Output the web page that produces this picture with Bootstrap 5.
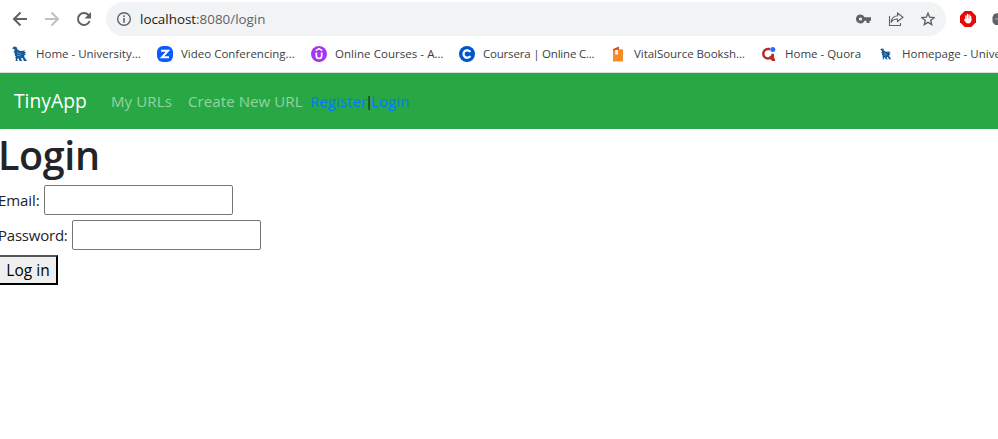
<!DOCTYPE html>
<html lang="en">
<head>
<meta charset="utf-8">
<title>TinyApp</title>
<link href="https://cdn.jsdelivr.net/npm/bootstrap@5.3.0/dist/css/bootstrap.min.css" rel="stylesheet">
<style>
body{font-family:"Segoe UI","Open Sans","Noto Sans",sans-serif;font-size:15px;line-height:24px;color:#212529;overflow:hidden;width:998px;height:439px}
svg{flex:none;display:block}
.toolbar{height:38px;padding-left:12px}
.forward,.reload{margin-left:16px}
.share{margin:0 17px}
.blocker{margin-left:14px}
.extension{margin-left:16px}
.omnibox{width:840px;height:34px;border-radius:17px;background:#f1f3f4;margin-left:14px;padding:0 11px 0 10px;font-size:13.4px;color:#5f6368}
.omnibox b{font-weight:400;color:#202124}
.bookmarks{height:35px;padding:0 0 3px 12px;border-bottom:1px solid #dadce0;font-size:11.5px;color:#3c4043}
.bookmark{flex:none;height:31px}
.bm-uni{width:145px}
.bm-zoom{width:154px}
.bm-udemy{width:148px;letter-spacing:.05px}
.bm-coursera{width:151px;letter-spacing:-.2px}
.bm-vital{width:151px;letter-spacing:-.05px}
.bm-quora{width:117px}
.bm-home svg{margin:0 10px 0 2px}
.site-nav{height:56px;background:#28a745;padding:0 0 0 14px}
.site-brand{width:97px;font-size:19.3px;color:#fff;text-decoration:none}
.site-link{color:rgba(255,255,255,.5);text-decoration:none}
.urls{width:77px;letter-spacing:.12px}.create{width:122px;letter-spacing:.1px}
.auth{letter-spacing:.08px}
.auth a{color:#007bff;text-decoration:none}
.auth span{font-family:"Liberation Sans",sans-serif;font-size:14px}
.page{margin-left:-2px}
.page h1{font-size:39.5px;font-weight:600;line-height:48px;margin:0;padding-top:2px;height:56px;letter-spacing:-.4px}
.form-line{height:30px;margin-bottom:5px}
.form-line input{width:189px;height:30px;border:1px solid #767676;border-radius:2px;background:#fff}
.email{width:46px;letter-spacing:-.1px}.password{width:74px;letter-spacing:-.22px}
.submit{width:60px;height:30px;border:2px outset #000;background:#efefef;color:#000;padding:0;line-height:26px;font-size:15.5px}
</style>
<script src="https://cdn.jsdelivr.net/npm/bootstrap@5.3.0/dist/js/bootstrap.bundle.min.js"></script>
</head>
<body class="bg-white">
<svg width="0" height="0" class="position-absolute"><defs>
<symbol id="bird" viewBox="0 0 16 16"><path fill="#155a96" d="M0 2.500 2 .5 4.500 1 5.500 3.500 8 5l5.500-.5L12 6l2.500.3-2 1.200L14 8.500l-1.700.7v1.800l2.700 4h-3l-1.500-3H9l.5 2 1 1H7.500L6.500 12l-1.500 1.500 1 1.500H3.500l.5-2.500-1-.5 1-1.500L2.500 9 3 7.500 1.500 6 2.700 5 2 3z"/><path stroke="#8fb3d1" stroke-width=".7" fill="none" d="m5 6.500 4.500 2M5 9l3.500 1"/></symbol>
</defs></svg>
<header>
<div class="toolbar d-flex align-items-center">
<svg width="16" height="16" viewBox="0 0 16 16" fill="none" stroke="#5f6368" stroke-width="2"><path d="M15 8H2M8.500 1.500 2 8l6.500 6.500"/></svg>
<svg class="forward" width="16" height="16" viewBox="0 0 16 16" fill="none" stroke="#bdc1c6" stroke-width="2"><path d="M1 8h13M7.500 1.500 14 8l-6.500 6.500"/></svg>
<svg class="reload" width="16" height="16" viewBox="0 0 16 16" fill="none" stroke="#5f6368" stroke-width="2"><path d="M13.600 10A6 6 0 1 1 12.300 3.800L14 5.500"/><path fill="#5f6368" stroke="none" d="M15 1v6.500H8.500z"/></svg>
<div class="omnibox d-flex align-items-center">
<svg width="16" height="16" viewBox="0 0 16 16"><circle cx="8" cy="8" r="6.300" fill="none" stroke="#5f6368" stroke-width="1.400"/><path fill="#5f6368" d="M7.200 4.300h1.600v1.600H7.200zM7.200 7h1.600v4.700H7.200z"/></svg>
<div class="ms-2 me-auto"><b>localhost</b>:8080/login</div>
<svg width="15" height="10" viewBox="0 0 15 10"><path fill="#5f6368" fill-rule="evenodd" d="M4.500.5A4.500 4.500 0 1 0 8.600 6.800H10.500V9h3V6.800H15V3.200H8.600A4.500 4.500 0 0 0 4.500.5zm0 2.900a1.600 1.600 0 1 1 0 3.200 1.600 1.600 0 0 1 0-3.200z"/></svg>
<svg class="share" width="16" height="16" viewBox="0 0 16 16" fill="none" stroke="#5f6368" stroke-width="1.100"><path d="M1.500 5v9.500h11v-2.500M9.500 2l5.500 4.200-5.500 4.300V8C6.500 8 4.500 9 3 11.500c.5-4 3-6.500 6.500-6.800z"/></svg>
<svg width="14" height="14" viewBox="0 0 14 14" fill="none" stroke="#5f6368" stroke-width="1.400"><path d="m7 1.200 1.700 4 4.300.4-3.300 2.800 1 4.200L7 10.400l-3.700 2.200 1-4.200L1 5.600l4.300-.4z"/></svg>
</div>
<svg class="blocker" width="16" height="16" viewBox="0 0 16 16"><path fill="#e50909" d="M4.700 0h6.600L16 4.700v6.600L11.300 16H4.700L0 11.300V4.700z"/><path stroke="#fff" stroke-width="1.300" stroke-linecap="round" fill="none" d="M5.900 9V4.800M7.500 8V3.500M9.100 8V3.800M10.700 9V5.200"/><path fill="#fff" d="M5.300 7.500h6.100c.3 3.300-.8 5-3.200 5-1.900 0-3.300-1.800-4.300-4l1-.4z"/></svg>
<svg class="extension" width="6" height="12" viewBox="0 0 6 12"><path fill="#5f6368" d="M6 0 2 1 .5 4v5L3 12h3z"/><path stroke="#aaa" d="M3 6h3"/></svg>
</div>
<div class="bookmarks d-flex align-items-center text-nowrap">
<div class="bookmark bm-uni d-flex align-items-center gap-2"><svg width="16" height="16"><use href="#bird"/></svg>Home - University...</div>
<div class="bookmark bm-zoom d-flex align-items-center gap-2"><svg width="16" height="16" viewBox="0 0 16 16"><rect width="16" height="16" rx="6" fill="#0b5cff"/><path fill="none" stroke="#fff" stroke-width="2" d="M4 4.700h7L5 11.300h7"/></svg>Video Conferencing...</div>
<div class="bookmark bm-udemy d-flex align-items-center gap-2"><svg width="16" height="16" viewBox="0 0 16 16"><circle cx="8" cy="8" r="8" fill="#a435f0"/><path fill="none" stroke="#fff" stroke-width="1.700" d="M5.300 6.500v3.200a2.700 2.700 0 0 0 5.400 0V6.500"/><path fill="none" stroke="#fff" stroke-width="1.300" d="m4.700 4.600 3.300-2 3.300 2"/></svg>Online Courses - A...</div>
<div class="bookmark bm-coursera d-flex align-items-center gap-2"><svg width="16" height="16" viewBox="0 0 16 16"><circle cx="8" cy="8" r="8" fill="#0056d2"/><path fill="none" stroke="#fff" stroke-width="2.300" d="M11.300 6A3.700 3.700 0 1 0 11.300 10"/></svg>Coursera | Online C...</div>
<div class="bookmark bm-vital d-flex align-items-center gap-2"><svg width="16" height="16" viewBox="0 0 16 16"><path fill="#f68b28" d="M3 3h10v12.500H3z"/><path fill="#fff" d="M9 0h5v3.200H9zM5.300 4H8v4.500H5.300z"/><path fill="#d94b20" d="M3 3 9 .5V3.500H7.500L4.500 4.200H3z"/></svg>VitalSource Booksh...</div>
<div class="bookmark bm-quora d-flex align-items-center gap-2"><svg width="16" height="16" viewBox="0 0 16 16"><path fill="none" stroke="#b92b27" stroke-width="2.500" d="M9 3H7a4.700 4.700 0 1 0 4.700 4.700V12.500M8.500 10.500l3.200 3.200H14"/><circle cx="11.800" cy="3.500" r="2.500" fill="#2e69ff"/></svg>Home - Quora</div>
<div class="bookmark bm-home d-flex align-items-center"><svg width="12" height="12"><use href="#bird"/></svg>Homepage - Univers...</div>
</div>
</header>
<nav class="site-nav d-flex align-items-center text-nowrap">
<a class="site-brand" href="#">TinyApp</a>
<a class="site-link urls" href="#">My URLs</a>
<a class="site-link create" href="#">Create New URL</a>
<div class="auth"><a href="#">Register</a><span>|</span><a href="#">Login</a></div>
</nav>
<main class="page">
<h1>Login</h1>
<form>
<div class="form-line d-flex align-items-center"><label class="email" for="email">Email:</label><input type="email" id="email"></div>
<div class="form-line d-flex align-items-center"><label class="password" for="password">Password:</label><input type="password" id="password"></div>
<button class="submit d-block" type="button">Log in</button>
</form>
</main>
</body>
</html>
